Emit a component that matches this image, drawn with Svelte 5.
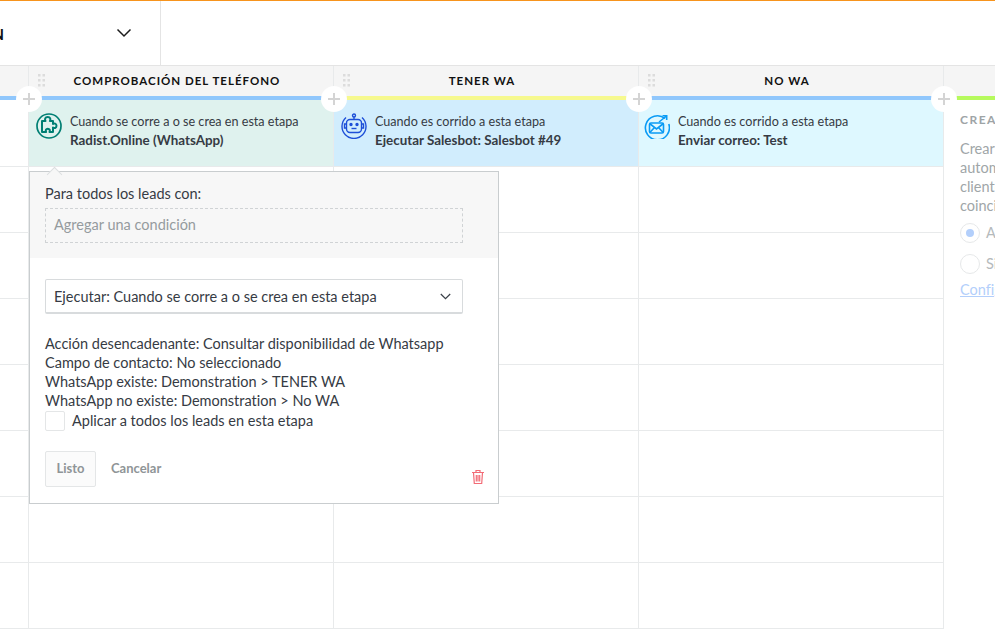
<script>
  const columns = [
    { title: 'COMPROBACIÓN DEL TELÉFONO', bar: 'blue', tint: 'mint', icon: 'puzzle', line: 'Cuando se corre a o se crea en esta etapa', name: 'Radist.Online (WhatsApp)' },
    { title: 'TENER WA', bar: 'yellow', tint: 'sky', icon: 'bot', line: 'Cuando es corrido a esta etapa', name: 'Ejecutar Salesbot: Salesbot #49' },
    { title: 'NO WA', bar: 'blue', tint: 'ice', icon: 'mail', line: 'Cuando es corrido a esta etapa', name: 'Enviar correo: Test' }
  ];
  const rows = [0, 1, 2, 3, 4, 5, 6];
  const summary = [
    'Acción desencadenante: Consultar disponibilidad de Whatsapp',
    'Campo de contacto: No seleccionado',
    'WhatsApp existe: Demonstration > TENER WA',
    'WhatsApp no existe: Demonstration > No WA'
  ];
</script>

<div class="page">
  <header class="top">
    <div class="pipeline">
      <span class="pipeline__name">DEMONSTRATION</span>
      <svg class="pipeline__arrow" width="16" height="10" viewBox="0 0 16 10"><path d="M1.5 1.5 8 8l6.5-6.5" fill="none" stroke="#1c1c1c" stroke-width="1.5"/></svg>
    </div>
  </header>

  <div class="board">
    <div class="col col--left">
      <div class="col__head"></div>
      <div class="col__bar blue"></div>
      <div class="card"></div>
      {#each rows as r}<div class="cell"></div>{/each}
    </div>

    {#each columns as col}
      <div class="col">
        <div class="col__head">
          <svg class="grip" width="7" height="13" viewBox="0 0 7 13" fill="#dcdcdc">
            <rect x="0" y="0" width="2.5" height="2.5"/><rect x="4.5" y="0" width="2.5" height="2.5"/>
            <rect x="0" y="5" width="2.5" height="2.5"/><rect x="4.5" y="5" width="2.5" height="2.5"/>
            <rect x="0" y="10" width="2.5" height="2.5"/><rect x="4.5" y="10" width="2.5" height="2.5"/>
          </svg>
          <span class="col__title">{col.title}</span>
        </div>
        <div class="col__bar {col.bar}"></div>
        <div class="card {col.tint}">
          {#if col.icon === 'puzzle'}
            <svg class="card__icon" width="26" height="26" viewBox="0 0 26 26" fill="none" stroke="#007f73" stroke-width="1.7">
              <circle cx="13" cy="13" r="12"/>
              <path transform="translate(-1 -1)" d="M7 9h3.5c-1-1.500-.5-4 2.200-4s3.200 2.500 2.200 4H18v3c1.200-1 3.500-.6 3.500 1.800s-2.300 2.800-3.500 1.700V20h-3.500c.8-1.700.2-3.200-1.700-3.200s-2.500 1.500-1.700 3.200H7z" stroke-linejoin="round" stroke-width="2"/>
            </svg>
          {:else if col.icon === 'bot'}
            <svg class="card__icon" width="26" height="26" viewBox="0 0 26 26" fill="none" stroke="#1d4fd8" stroke-width="1.4">
              <path d="M5 4.500A12 12 0 1 0 21 4.500"/>
              <circle cx="13" cy="2.500" r="1.500"/>
              <path d="M13 4v2.500"/>
              <rect x="5.500" y="6.500" width="15" height="13" rx="3.500"/>
              <path d="M5.500 11H3.500v4h2M20.500 11h2v4h-2"/>
              <circle cx="10" cy="11.500" r="1" fill="#1d4fd8"/>
              <circle cx="16" cy="11.500" r="1" fill="#1d4fd8"/>
              <path d="M10.500 15.500h5"/>
            </svg>
          {:else}
            <svg class="card__icon" width="26" height="26" viewBox="0 0 26 26" fill="none" stroke="#0a9bf5" stroke-width="1.6">
              <path d="M21 5.500A12 12 0 1 0 24.800 11"/>
              <rect x="5.500" y="10" width="14" height="10" rx="1.500"/>
              <path d="M5.500 10.500 12.500 16l7-5.500M5.800 19.500l4.700-5M19.200 19.500l-4.700-5"/>
              <path d="M15 9 22.500 3M18.500 2.800h4.200V7"/>
            </svg>
          {/if}
          <div class="card__text">
            <div class="card__line">{col.line}</div>
            <div class="card__name">{col.name}</div>
          </div>
        </div>
        {#each rows as r}<div class="cell"></div>{/each}
        <button class="plus" aria-label="Agregar"></button>
      </div>
    {/each}

    <div class="col col--last">
      <div class="col__head"></div>
      <div class="col__bar green"></div>
      <div class="incoming">
        <div class="incoming__title">CREAR LEADS</div>
        <p class="incoming__text">Crear un lead<br>automáticamente<br>cliente<br>coincidencia</p>
        <div class="radio radio--on"><span class="radio__dot"></span><span>Activar</span></div>
        <div class="radio"><span class="radio__dot"></span><span>Si</span></div>
        <span class="incoming__link">Configurar</span>
      </div>
      <button class="plus" aria-label="Agregar"></button>
    </div>

    <div class="popup">
      <div class="popup__cond">
        <div class="popup__label">Para todos los leads con:</div>
        <div class="popup__add">Agregar una condición</div>
      </div>
      <div class="popup__caret"></div>
      <div class="popup__body">
        <div class="select">
          <span>Ejecutar: Cuando se corre a o se crea en esta etapa</span>
          <svg width="11" height="7" viewBox="0 0 11 7"><path d="M.8 1 5.500 5.700 10.200 1" fill="none" stroke="#3a4048" stroke-width="1.200"/></svg>
        </div>
        <div class="summary">
          {#each summary as s}<div>{s}</div>{/each}
        </div>
        <label class="check"><span class="check__box"></span>Aplicar a todos los leads en esta etapa</label>
        <div class="actions">
          <button class="btn">Listo</button>
          <button class="btn btn--plain">Cancelar</button>
          <svg class="trash" width="14" height="16" viewBox="0 0 14 16" fill="none" stroke="#f26b76" stroke-width="1.200">
            <path d="M1 3.500h12M5 3.200V1.500h4v1.700M2.500 3.500l.8 11h7.400l.8-11M5.300 6v6.500M7 6v6.500M8.700 6v6.500"/>
          </svg>
        </div>
      </div>
    </div>
  </div>
</div>

<style>
  :global(body) {
    margin: 0;
    background: #fff;
    overflow: hidden;
  }

  .page {
    width: 995px;
    height: 636px;
    overflow: hidden;
    font-family: Lato, "Open Sans", sans-serif;
    font-size: 14.5px;
    font-variant-ligatures: none;
    color: #363b44;
  }

  .top {
    box-sizing: border-box;
    border-top: 1px solid #f7941d;
    border-bottom: 1px solid #e4e4e4;
    height: 66px;
    display: flex;
  }
  .pipeline {
    width: 161px;
    box-sizing: border-box;
    border-right: 1px solid #e4e4e4;
    display: flex;
    align-items: center;
    justify-content: flex-end;
    padding-right: 28px;
    overflow: hidden;
  }
  .pipeline__name {
    flex: none;
    margin-right: 112px;
    font-weight: 700;
    font-size: 16px;
    color: #111;
    white-space: nowrap;
  }
  .pipeline__arrow {
    flex: none;
  }

  .board {
    position: relative;
    display: grid;
    grid-template-columns: 29px 305px 305px 305px 1fr;
  }
  .col {
    position: relative;
    box-sizing: border-box;
    border-right: 1px solid #e8eaeb;
  }
  .col--last {
    border-right: 0;
  }
  .col__head {
    height: 30px;
    box-sizing: border-box;
    background: #f5f5f5;
    display: flex;
    align-items: center;
    justify-content: center;
    padding: 0 8px 2px 0;
    position: relative;
  }
  .grip {
    position: absolute;
    left: 9px;
    top: 8px;
  }
  .col__title {
    font-weight: 700;
    font-size: 11.5px;
    letter-spacing: 1px;
    color: #111;
  }
  .col__bar {
    height: 4px;
  }
  .blue { background: #90c7fc; }
  .yellow { background: #f6f98e; }
  .green { background: #b6fa5d; }

  .card {
    height: 67px;
    box-sizing: border-box;
    border-bottom: 1px solid #e8eaeb;
    display: flex;
    align-items: flex-start;
    padding: 13px 0 0 7px;
    gap: 8px;
  }
  .mint { background: #dff2ee; }
  .sky { background: #d1edfd; }
  .ice {
    background: #def8ff;
    padding-left: 5px;
  }
  .card__icon {
    flex: none;
  }
  .card__text {
    line-height: 19.5px;
    margin-top: -1.5px;
  }
  .card__line {
    font-size: 12.6px;
  }
  .card__name {
    font-size: 13.4px;
    font-weight: 700;
  }

  .cell {
    height: 66px;
    box-sizing: border-box;
    border-bottom: 1px solid #e8eaeb;
  }

  .plus {
    position: absolute;
    left: -13px;
    top: 20px;
    width: 26px;
    height: 26px;
    padding: 0;
    border: 0;
    border-radius: 50%;
    background:
      linear-gradient(#d4d4d4, #d4d4d4) center / 12px 2px no-repeat,
      linear-gradient(#d4d4d4, #d4d4d4) center / 2px 12px no-repeat,
      #fff;
  }

  .incoming {
    padding: 12px 0 0 16px;
    color: #a0a6a8;
    white-space: nowrap;
  }
  .incoming__title {
    font-size: 12px;
    font-weight: 700;
    letter-spacing: 1.5px;
    margin-bottom: 12px;
    color: #9ea4a6;
  }
  .incoming__text {
    margin: 0 0 2px;
    line-height: 19px;
  }
  .radio {
    display: flex;
    align-items: center;
    gap: 6px;
    height: 31px;
    color: #b5babc;
  }
  .radio__dot {
    width: 18px;
    height: 18px;
    border: 1px solid #e6e8e9;
    border-radius: 50%;
    background: #fff;
    position: relative;
    flex: none;
  }
  .radio--on .radio__dot::after {
    content: '';
    position: absolute;
    inset: 5px;
    border-radius: 50%;
    background: #b3cffb;
  }
  .incoming__link {
    display: block;
    margin-top: 2px;
    color: #b3cffb;
    text-decoration: underline;
  }

  .popup {
    position: absolute;
    left: 29px;
    top: 105px;
    width: 470px;
    height: 333px;
    box-sizing: border-box;
    background: #fff;
    border: 1px solid #c9cdcf;
    z-index: 3;
  }
  .popup__caret {
    position: absolute;
    left: 19px;
    top: -3px;
    width: 11px;
    height: 11px;
    box-sizing: border-box;
    background: #f7f7f7;
    border-left: 1px solid #dcdfe0;
    border-top: 1px solid #dcdfe0;
    transform: rotate(45deg);
  }
  .popup__cond {
    background: #f7f7f7;
    height: 86px;
    box-sizing: border-box;
    padding: 12px 35px 0 15px;
  }
  .popup__label {
    line-height: 20px;
    margin-bottom: 4px;
  }
  .popup__add {
    height: 35px;
    box-sizing: border-box;
    border: 1px dashed #d0d3d5;
    padding: 0 8px;
    line-height: 31px;
    color: #959b9e;
  }
  .popup__body {
    padding: 21px 35px 0 15px;
  }
  .select {
    height: 35px;
    box-sizing: border-box;
    border: 1px solid #d8dbdd;
    border-bottom-width: 2px;
    border-radius: 2px;
    display: flex;
    align-items: center;
    justify-content: space-between;
    padding: 0 11px 0 8px;
  }
  .summary {
    margin-top: 20px;
    line-height: 19px;
  }
  .check {
    display: flex;
    align-items: center;
    gap: 7px;
    height: 20px;
    line-height: 18px;
    margin-top: 1px;
  }
  .check__box {
    width: 20px;
    height: 20px;
    box-sizing: border-box;
    border: 1px solid #e4e6e7;
    border-radius: 2px;
  }
  .actions {
    position: relative;
    display: flex;
    align-items: center;
    gap: 15px;
    margin-top: 20px;
  }
  .btn {
    height: 36px;
    width: 51px;
    box-sizing: border-box;
    border: 1px solid #e4e6e7;
    border-radius: 2px;
    background: #fbfbfb;
    font: 700 13px Lato, sans-serif;
    color: #8f9597;
    padding: 0 0 2px;
  }
  .btn--plain {
    width: auto;
    border: 0;
    background: none;
  }
  .trash {
    position: absolute;
    left: 426px;
    top: 18px;
  }
</style>
